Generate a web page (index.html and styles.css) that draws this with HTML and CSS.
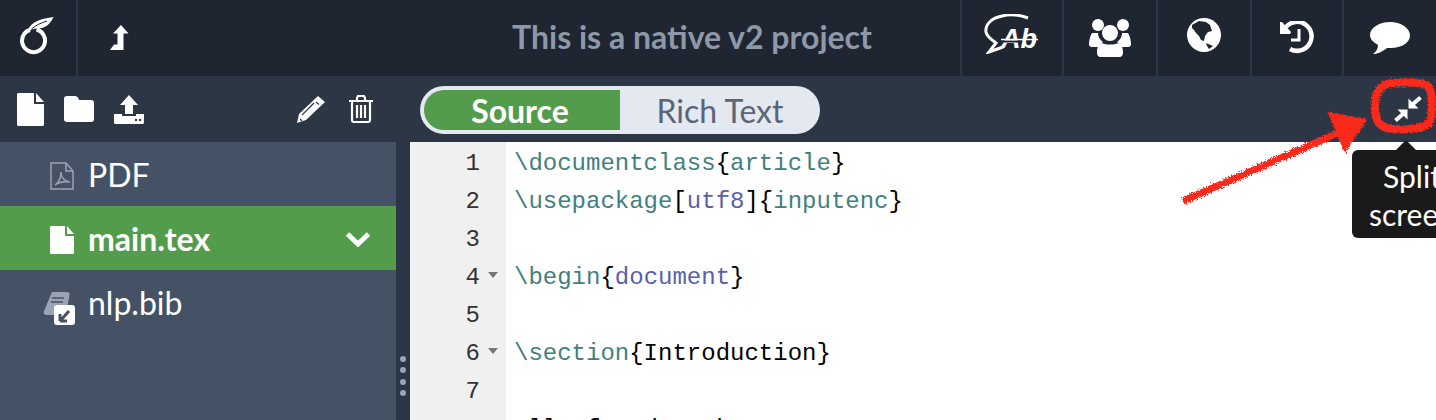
FILE: index.html
```html
<!DOCTYPE html>
<html lang="en">
<head>
<meta charset="utf-8">
<title>This is a native v2 project</title>
<link rel="stylesheet" href="styles.css">
</head>
<body>
<div class="app">
  <header class="topbar">
    <div class="tb-cell tb-logo">
      <svg width="36" height="42" viewBox="0 0 36 42"><path d="M16.500 14.500A11.500 11.500 0 1 1 4.500 18.500C6 16.500 8 15.500 10 15" fill="none" stroke="#fff" stroke-width="4"/><path d="M7.500 17C9 9 17 4 33.500 2 30 9 26.500 13 17.500 13.500 13 13.700 10 15 7.500 17z" fill="#fff"/><path d="M11.500 14C16 10 21 8 27 6" fill="none" stroke="#1f2631" stroke-width="1"/></svg>
    </div>
    <div class="tb-cell tb-up">
      <svg width="22" height="26" viewBox="0 0 22 26"><path d="M12 0L19.500 8.500H14.500V25H1L5 19.500H8.500V8.500H4z" fill="#fff"/></svg>
    </div>
    <div class="tb-title">This is a native v2 project</div>
    <div class="tb-cell tb-w102 tb-raise">
      <svg width="56" height="40" viewBox="0 0 56 40"><path d="M44 4C36 1 26 0 18 2 8 4 1 10 2 18c1 5 6 8 10 11L5 38l14-5" fill="none" stroke="#fff" stroke-width="3"/><text x="17" y="34" class="ab-glyph">Ab</text><path d="M18 27.500h20" stroke="#1f2631" stroke-width="2"/><path d="M17 25.500h37" stroke="#fff" stroke-width="1.500"/></svg>
    </div>
    <div class="tb-cell tb-w94">
      <svg width="44" height="40" viewBox="0 0 44 40"><circle cx="10" cy="7" r="6" fill="#fff"/><circle cx="35" cy="7" r="6" fill="#fff"/><path d="M4 15h6c0 4 2 7 5 9-2 1-4 3-4 5H4c-2 0-3-1-3-3 0-3 1-8 3-11zM40 15h-6c0 4-2 7-5 9 2 1 4 3 4 5h7c2 0 3-1 3-3 0-3-1-8-3-11z" fill="#fff"/><circle cx="22" cy="15" r="8" fill="#fff"/><path d="M14 25c4 2 12 2 16 0 2 0 5 3 5 9 0 3-1 5-4 5H13c-3 0-4-2-4-5 0-6 3-9 5-9z" fill="#fff"/></svg>
    </div>
    <div class="tb-cell tb-w94 tb-raise-s">
      <svg width="36" height="36" viewBox="0 0 36 36"><circle cx="18" cy="18" r="17" fill="#fff"/><path d="M6 8L13 4 20 5 24 8 26 14 22 15 19 19 18 24 15 23 13 19 10 16 8 13 6 11zM20 26L27 29 23 32 21 29z" fill="#1f2631"/></svg>
    </div>
    <div class="tb-cell tb-w92">
      <svg width="36" height="34" viewBox="0 0 36 34"><path d="M7 6a14.500 14.500 0 1 1 4 22" fill="none" stroke="#fff" stroke-width="4.500"/><path d="M1 1h2l9 10-1 2H1z" fill="#fff"/><path d="M20 8v11h-8" fill="none" stroke="#fff" stroke-width="3"/></svg>
    </div>
    <div class="tb-cell tb-last">
      <svg width="40" height="36" viewBox="0 0 40 36"><path d="M20 2c11 0 20 6 20 13.500S31 28 21 28c-1 0-3 0-4-.1C13 31 8 34 3 34c3-2 5-5 5-9C3 22 0 19 0 15 0 8 9 2 20 2z" fill="#fff"/></svg>
    </div>
  </header>
  <div class="workspace">
    <aside class="files">
      <div class="file-tools">
        <div class="tool-group">
          <svg width="27" height="33" viewBox="0 0 27 33"><path d="M1 0h16v11h10v21l-1 1H1l-1-1V1zM19 0l8 9h-8z" fill="#fff"/></svg>
          <svg width="30" height="26" viewBox="0 0 30 26"><path d="M3 0h8c2 0 3 1 4 4h12c2 0 3 1 3 3v16c0 2-1 3-3 3H3c-2 0-3-1-3-3V3c0-2 1-3 3-3z" fill="#fff"/></svg>
          <svg width="30" height="29" viewBox="0 0 30 29"><path d="M15 0l9 10h-5v9h-8v-9H6zM0 19h8v2h14v-2h8v9l-1 1H1l-1-1z" fill="#fff"/><circle cx="22" cy="25" r="1.200" fill="#2c3645"/><circle cx="26" cy="25" r="1.200" fill="#2c3645"/></svg>
        </div>
        <div class="tool-group tool-right">
          <svg width="29" height="28" viewBox="0 0 29 28"><path d="M21 1l7 6L9 25 0 28l2-9z" fill="#fff"/><path d="M19 7l3 2.500M5 20l12-12M3 24l2 2" stroke="#2c3645" stroke-width="1.200" fill="none"/></svg>
          <svg width="26" height="28" viewBox="0 0 26 28"><path d="M1 6h24M9 6V3l1-2h6l1 2v3M4 6v19c0 1 1 2 2 2h14c1 0 2-1 2-2V6" fill="none" stroke="#fff" stroke-width="2.200"/><path d="M9 10v13M13 10v13M17 10v13" stroke="#fff" stroke-width="2.200"/></svg>
        </div>
      </div>
      <ul class="file-list">
        <li class="file-row">
          <svg class="file-icon" width="24" height="28" viewBox="0 0 24 28"><path d="M1 1h15l7 8v18H1zM16 1v8h7M5 23c3-2 6-7 6-13 0 5 3 9 9 10-6-1-11 0-15 3z" fill="none" stroke="#98a3b3" stroke-width="1.500"/></svg>
          <span>PDF</span>
        </li>
        <li class="file-row is-active">
          <svg class="file-icon" width="24" height="28" viewBox="0 0 24 28"><path d="M1 0h14v10h9v17l-1 1H1l-1-1V1zM17 0l7 8h-7z" fill="#fff"/></svg>
          <span>main.tex</span>
          <svg class="chev" width="26" height="17" viewBox="0 0 26 17"><path d="M2.500 4L13 14 23.500 4" fill="none" stroke="#fff" stroke-width="5"/></svg>
        </li>
        <li class="file-row">
          <span class="bib-icon">
            <svg width="32" height="35" viewBox="0 0 32 35"><path d="M9 1h15c2 0 3 1 2.500 3L23 24H4c-3 0-4-2-3-4z" fill="#98a3b3"/><path d="M9 7h12M8 11h12" stroke="#455265" stroke-width="1.500"/><rect x="11" y="14" width="21" height="20" rx="3" fill="#fff"/><path d="M17 30v-7M17 30h7M18 29l8-9" fill="none" stroke="#455265" stroke-width="3"/></svg>
          </span>
          <span>nlp.bib</span>
        </li>
      </ul>
    </aside>
    <div class="splitter">
      <i></i><i></i><i></i><i></i>
    </div>
    <main class="editor">
      <div class="ed-toolbar">
        <div class="switch">
          <span class="sw-on">Source</span>
          <span class="sw-off">Rich Text</span>
        </div>
        <svg class="split-icon" width="28" height="28" viewBox="0 0 28 28"><path d="M14.500 3.500v10h10zM13.500 14.500h-10l10 10z" fill="#fff"/><path d="M19 9l7.500-6.500M9 19l-7.500 6.500" stroke="#fff" stroke-width="4" fill="none"/></svg>
      </div>
      <div class="code">
        <div class="ln">1</div><div class="cl"><span class="k">\documentclass</span>{<span class="k">article</span>}</div>
        <div class="ln">2</div><div class="cl"><span class="k">\usepackage</span>[<span class="v">utf8</span>]{<span class="k">inputenc</span>}</div>
        <div class="ln">3</div><div class="cl"></div>
        <div class="ln fold">4</div><div class="cl"><span class="k">\begin</span>{<span class="v">document</span>}</div>
        <div class="ln">5</div><div class="cl"></div>
        <div class="ln fold">6</div><div class="cl"><span class="k">\section</span>{Introduction}</div>
        <div class="ln">7</div><div class="cl"></div>
        <div class="ln"></div><div class="cl">all of and mask</div>
      </div>
    </main>
  </div>
  <div class="tooltip">Split<br>screen</div>
  <svg class="scribble" width="1436" height="420" viewBox="0 0 1436 420">
    <defs><filter id="rough" x="-5%" y="-5%" width="110%" height="110%"><feTurbulence type="fractalNoise" baseFrequency="0.8" numOctaves="2" seed="4"/><feDisplacementMap in="SourceGraphic" scale="5"/></filter></defs>
    <g filter="url(#rough)" fill="none" stroke="#f92a1f">
      <path d="M1393 83c16-1 30-1 35 3 5 5 5 30 1 37-4 6-30 8-42 5-9-2-12-9-12-21 0-15 5-23 18-24z" stroke-width="8"/>
      <path d="M1183 201L1340 132" stroke-width="7"/>
      <path d="M1330 114L1365 120 1345 150z" fill="#f92a1f" stroke-width="3"/>
    </g>
  </svg>
</div>
</body>
</html>
```
FILE: styles.css
```css
* { box-sizing: border-box; }
html, body { margin: 0; height: 100%; overflow: hidden; }
body { font-family: Lato, "Open Sans", sans-serif; background: #fff; }
.app { position: relative; width: 1436px; height: 420px; overflow: hidden; display: flex; flex-direction: column; }
.topbar { height: 76px; flex: none; display: flex; background: #1f2631; color: #fff; }
.tb-cell { display: flex; align-items: center; justify-content: center; flex: none; border-left: 2px solid #2c3645; }
.tb-logo { width: 78px; border-left: 0; border-right: 2px solid #2c3645; padding-bottom: 4px; }
.tb-up { width: 84px; border-left: 0; }
.tb-title { flex: 1; text-align: center; font-size: 32px; font-weight: 700; line-height: 74px; color: #8d98a8; padding-left: 262px; }
.tb-w102 { width: 102px; }
.tb-w94 { width: 94px; }
.tb-w92 { width: 92px; }
.tb-last { width: 94px; }
.tb-raise { padding-bottom: 8px; }
.tb-raise-s { padding-bottom: 6px; }
.ab-glyph { font-family: "Liberation Sans", sans-serif; font-size: 27px; font-weight: 700; font-style: italic; fill: #fff; }
.workspace { flex: 1; display: flex; min-height: 0; }
.files { width: 396px; flex: none; background: #455265; display: flex; flex-direction: column; }
.file-tools { height: 66px; flex: none; background: #2c3645; display: flex; align-items: center; justify-content: space-between; padding: 0 22px 0 17px; }
.tool-group { display: flex; align-items: center; gap: 20px; }
.tool-right { gap: 22px; }
.file-list { list-style: none; margin: 0; padding: 0; }
.file-row { height: 64px; display: flex; align-items: center; padding-left: 50px; color: #fff; font-size: 32px; gap: 14px; }
.file-row.is-active { background: #529c4b; font-weight: 700; }
.file-icon { flex: none; margin-top: 4px; }
.chev { margin-left: auto; margin-right: 25px; }
.bib-icon { width: 24px; flex: none; display: flex; justify-content: flex-end; margin-top: 12px; }
.bib-icon svg { flex: none; margin-right: -1px; }
.splitter { width: 14px; flex: none; background: #2c3645; display: flex; flex-direction: column; align-items: center; justify-content: flex-end; gap: 5.500px; padding-bottom: 24px; }
.splitter i { width: 6px; height: 6px; border-radius: 50%; background: #98a3b3; display: block; }
.editor { flex: 1; min-width: 0; display: flex; flex-direction: column; }
.ed-toolbar { height: 66px; flex: none; background: #2c3645; display: flex; align-items: center; justify-content: space-between; padding: 0 14px 0 10px; }
.switch { width: 400px; height: 48px; margin-top: 2px; border-radius: 24px; background: #e4e8f0; padding: 4px; display: flex; font-size: 32px; line-height: 41px; }
.sw-on { width: 196px; padding-right: 4px; background: #529c4b; color: #fff; font-weight: 700; text-align: center; border-radius: 20px 0 0 20px; }
.sw-off { flex: 1; padding-left: 4px; text-align: center; color: #5a6577; }
.code { flex: 1; min-height: 0; overflow: hidden; display: grid; grid-template-columns: 96px 1fr; grid-auto-rows: 38px; align-content: start; font-family: "Liberation Mono", monospace; font-size: 24px; color: #000; }
.ln { background: #f0f0f0; color: #333; text-align: right; padding-right: 26px; line-height: 44px; position: relative; }
.fold::after { content: ""; position: absolute; right: 8px; top: 16px; border: 5px solid transparent; border-top: 6px solid #777; border-bottom: 0; }
.cl { padding-left: 8px; line-height: 44px; white-space: pre; }
.k { color: #42807f; }
.v { color: #5b5fa8; }
.tooltip { position: absolute; left: 1352px; top: 150px; width: 120px; height: 88px; background: #1a1a1a; color: #fff; border-radius: 6px; text-align: center; font-size: 30px; line-height: 38px; padding: 7px 0; }
.tooltip::before { content: ""; position: absolute; left: 44px; top: -10px; border: 10px solid transparent; border-top: 0; border-bottom-color: #1a1a1a; }
.scribble { position: absolute; left: 0; top: 0; pointer-events: none; }
```
